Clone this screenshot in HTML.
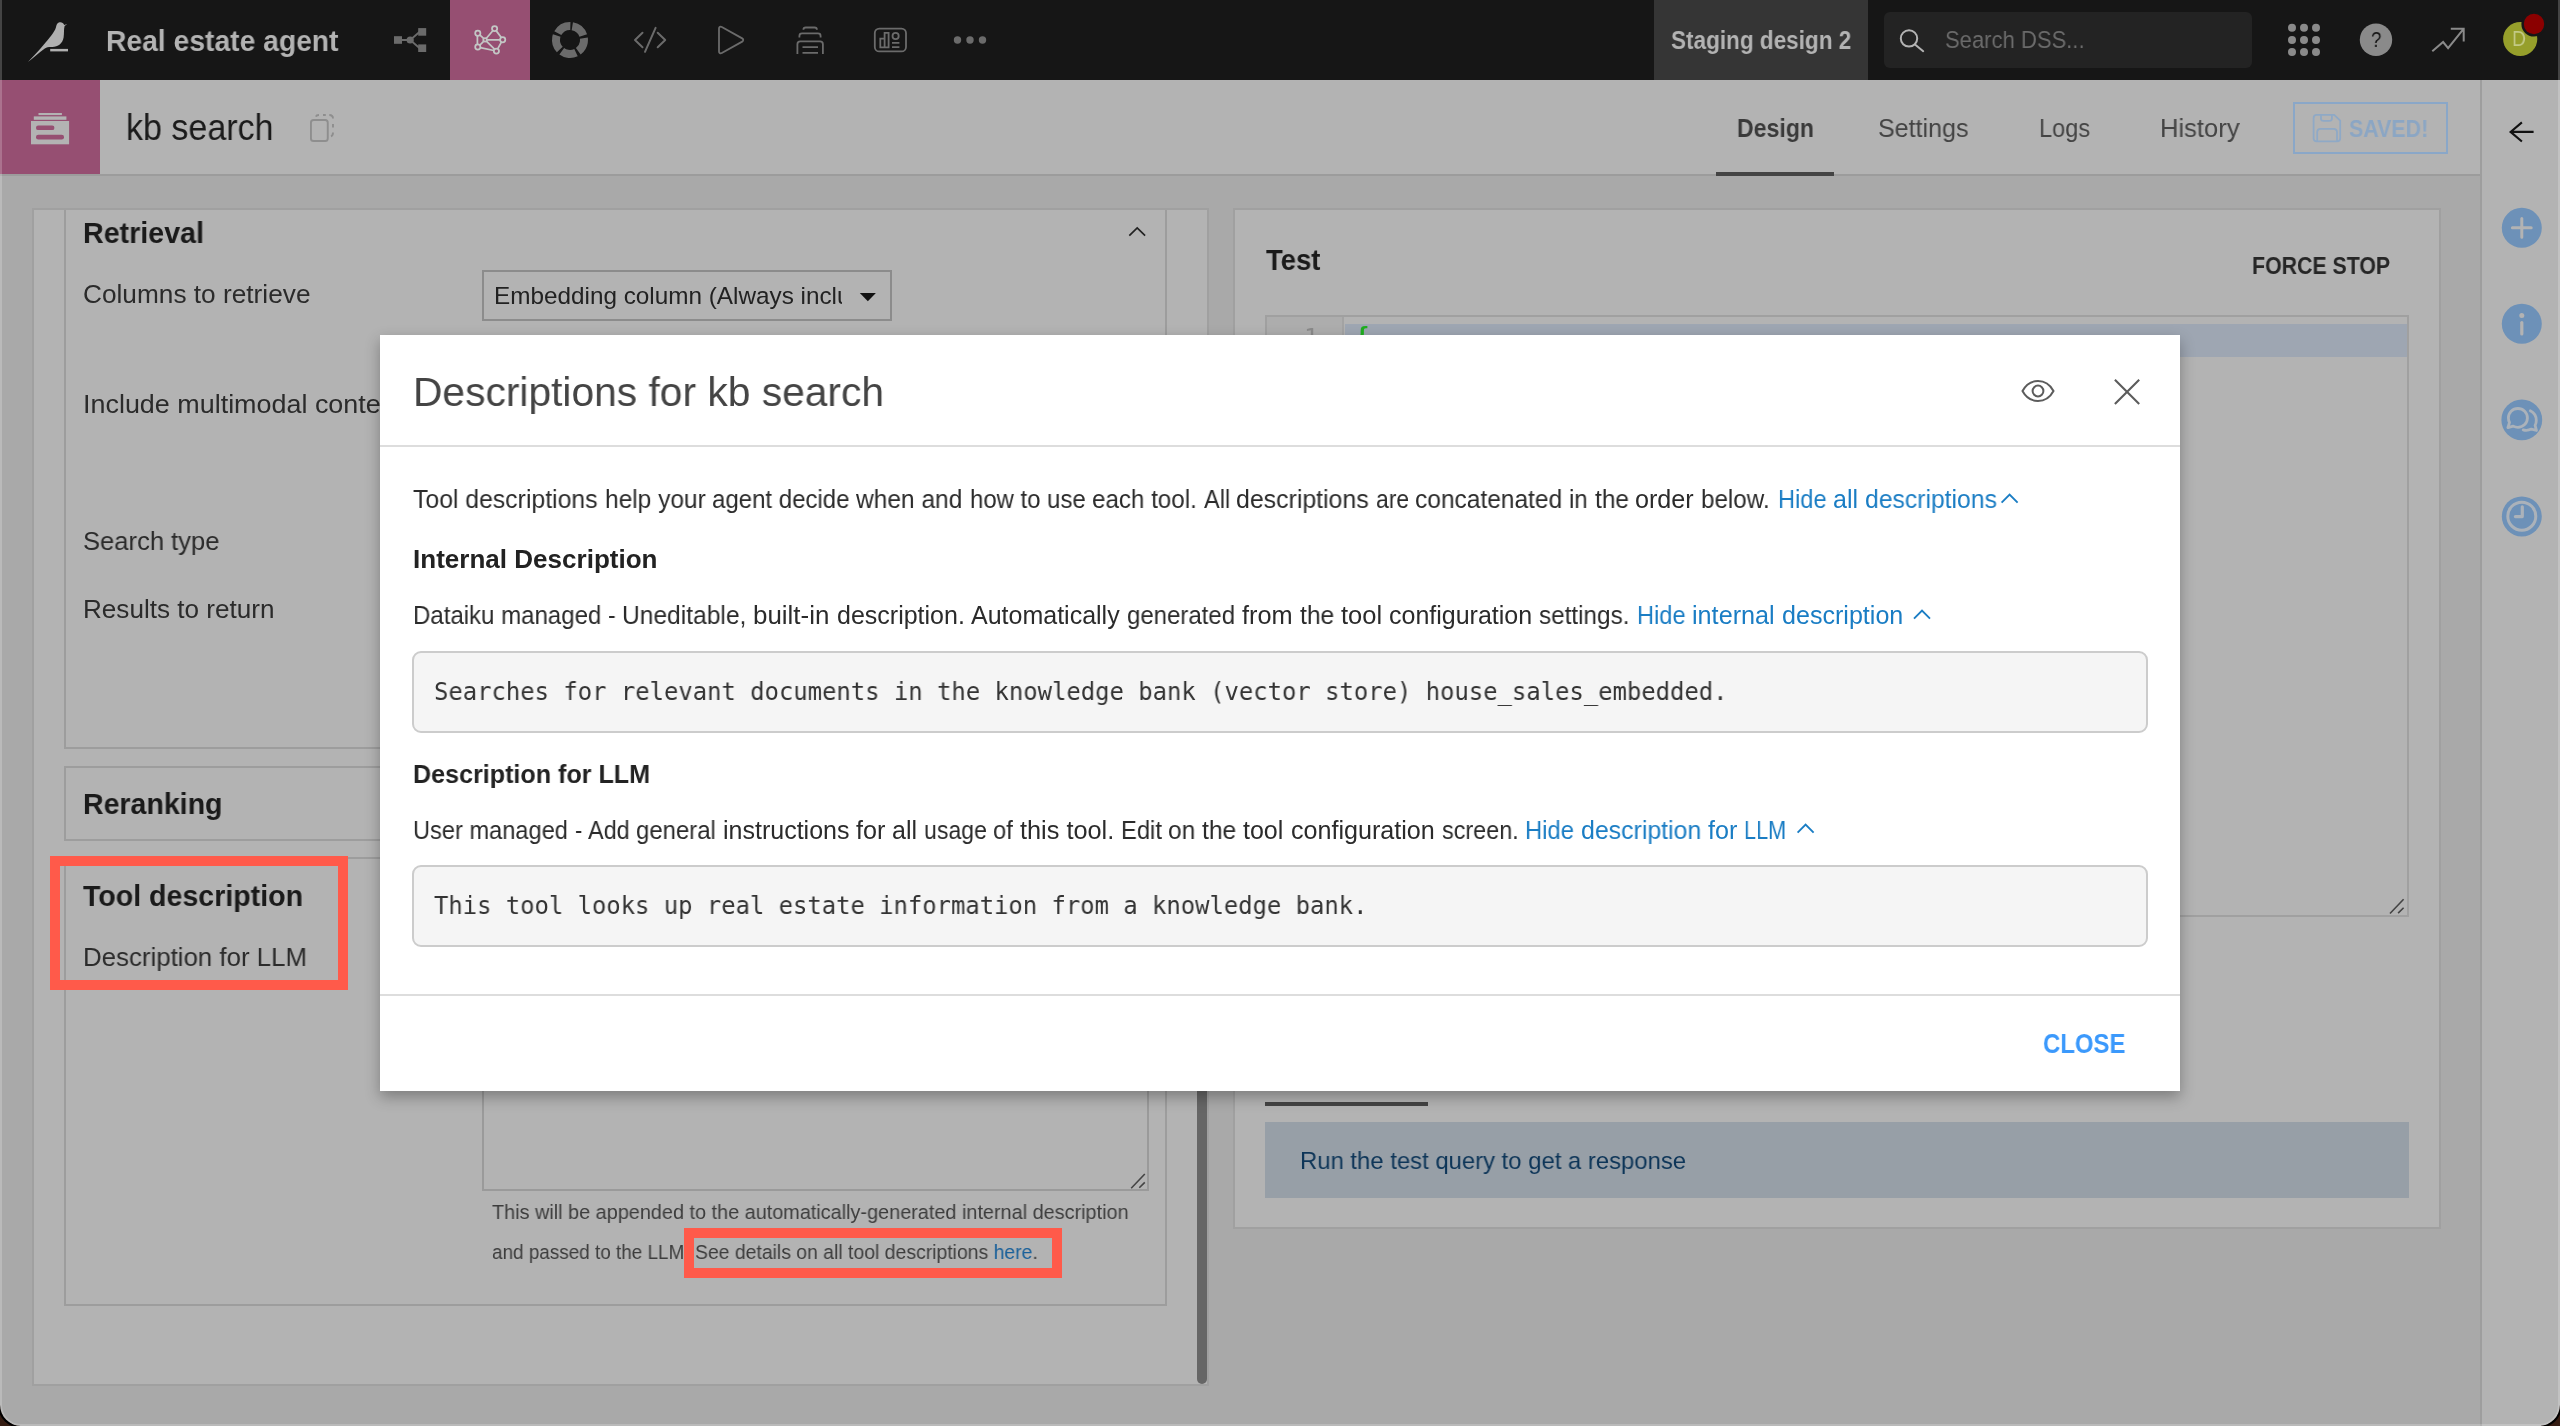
<!DOCTYPE html>
<html lang="en"><head><meta charset="utf-8"><title>kb search - Real estate agent</title>
<style>
html,body{margin:0;padding:0;}
body{width:2560px;height:1426px;overflow:hidden;position:relative;background:#a9a9a9;font-family:"Liberation Sans",sans-serif;}
.a{position:absolute;box-sizing:border-box;}
.t{position:absolute;white-space:pre;line-height:1;transform-origin:0 50%;will-change:transform;}
svg{position:absolute;overflow:visible;}
</style></head><body>
<!-- ===== background app (dimmed) ===== -->
<div class="a" id="nav" style="left:0;top:0;width:2560px;height:80px;background:#161616"></div>
<div class="a" id="navpink" style="left:450px;top:0;width:80px;height:80px;background:#964f72"></div>
<div class="a" id="navstag" style="left:1654px;top:0;width:214px;height:80px;background:#353535"></div>
<div class="a" id="navsearch" style="left:1884px;top:12px;width:368px;height:56px;background:#232323;border-radius:6px"></div>
<div class="a" id="hdr" style="left:0;top:80px;width:2480px;height:96px;background:#b3b3b3;border-bottom:2px solid #9c9c9c"></div>
<div class="a" id="hdrpink" style="left:0;top:80px;width:100px;height:94px;background:#964f72"></div>
<div class="a" id="tabline" style="left:1716px;top:172px;width:118px;height:4px;background:#444"></div>
<div class="a" id="savedbtn" style="left:2293px;top:102px;width:155px;height:52px;border:2px solid #8aa7c8"></div>
<div class="a" id="side" style="left:2480px;top:80px;width:80px;height:1346px;background:#b3b3b3;border-left:2px solid #9e9e9e"></div>
<!-- left panel -->
<div class="a" id="lp" style="left:32px;top:208px;width:1177px;height:1178px;background:#b3b3b3;border:2px solid #a0a0a0"></div>
<div class="a" id="sec1" style="left:64px;top:180px;width:1103px;height:569px;border:2px solid #9d9d9d"></div>
<div class="a" id="sec1mask" style="left:60px;top:176px;width:1120px;height:32px;background:#a9a9a9"></div>
<div class="a" id="lptop" style="left:32px;top:208px;width:1177px;height:2px;background:#a0a0a0"></div>
<div class="a" id="sec2" style="left:64px;top:766px;width:1103px;height:75px;border:2px solid #9d9d9d"></div>
<div class="a" id="sec3" style="left:64px;top:857px;width:1103px;height:449px;border:2px solid #9d9d9d"></div>
<div class="a" id="sel" style="left:482px;top:269.500px;width:410px;height:51px;border:2px solid #8c8c8c"></div>
<div class="a" id="selclip" style="left:490px;top:276px;width:351.500px;height:40px;overflow:hidden"><span class="t" id="seltxt" style="left:3.500px;top:7.700px;font-size:24.300px;color:#222">Embedding column (Always included)</span></div>
<div class="a" id="ta" style="left:482px;top:900px;width:667px;height:291px;border:2px solid #9a9a9a"></div>
<div class="a" id="sb" style="left:1197px;top:700px;width:10px;height:684px;background:#666;border-radius:5px"></div>
<!-- right panel -->
<div class="a" id="rp" style="left:1233px;top:208px;width:1208px;height:1021px;background:#b3b3b3;border:2px solid #a0a0a0"></div>
<div class="a" id="ed" style="left:1265px;top:314.500px;width:1144px;height:602.500px;border:2px solid #a0a0a0;background:#b3b3b3"></div>
<div class="a" id="edgut" style="left:1267px;top:317px;width:77px;height:598px;background:#adadad;border-right:2px solid #a3a3a3"></div>
<div class="a" id="edline" style="left:1345px;top:324px;width:1062px;height:32.500px;background:#9ea6b2"></div>
<span class="t" id="ed1" style="left:1304px;top:325.500px;font-size:24px;color:#8a8a8a;font-family:'DejaVu Sans Mono','Liberation Mono',monospace">1</span>
<span class="t" id="edb" style="left:1355px;top:324.500px;font-weight:700;font-size:24px;color:#1fae1f;font-family:'DejaVu Sans Mono','Liberation Mono',monospace">{</span>
<div class="a" id="rtab" style="left:1265px;top:1102px;width:163px;height:4px;background:#444"></div>
<div class="a" id="rinfo" style="left:1265px;top:1122px;width:1144px;height:76px;background:#979fa7"></div>
<svg id="icons-bg" width="2560" height="1426" viewBox="0 0 2560 1426" style="left:0;top:0" fill="none">
<!-- bird logo -->
<path d="M67.3 24.1 L64.2 24.9 C63.2 21.9 59.3 21.2 57.4 23.6 C56.1 25.2 56.4 27 55.3 29.2 C52.6 34.5 47 41 40.5 48.5 C36 53.5 31.5 58.2 27.9 62.1 C33.5 57.5 39 52.5 44.8 48.4 C47 47 49 46.8 52 46.9 C58 47 62.6 43.5 63.6 37.5 C64.3 33 63.6 29.5 64.6 26 Z" fill="#b0b0b0"/>
<rect x="50.2" y="48.9" width="17.8" height="2.5" fill="#b0b0b0"/>
<!-- flow icon -->
<g fill="#6b6b6b" stroke="#6b6b6b"><rect x="394" y="36.2" width="8" height="7.6" stroke="none"/><rect x="418.2" y="28.1" width="8" height="7.6" stroke="none"/><rect x="418.2" y="44.4" width="8" height="7.6" stroke="none"/><circle cx="410.2" cy="40" r="3.6" stroke="none"/><path d="M398 40H410M410.2 40L420 31.5M410.2 40L420 48.5" stroke-width="1.8" fill="none"/></g>
<!-- agent network icon -->
<g stroke="#c3c7c5" stroke-width="1.750" fill="none"><path d="M477.400 36V44.300M480 35.200L483.600 38.400M480 45L483.600 41.300M492.800 30.800L486.400 38.300M496.300 30.900L501.300 37.500M487.100 39.800H500M501.400 42.200L497.800 48.700M486.600 41.400L494.500 49.100M480.300 47.700L493.800 50.500"/><circle cx="477.800" cy="33.300" r="2.600"/><circle cx="494.600" cy="28.600" r="2.600"/><circle cx="502.700" cy="39.800" r="2.600"/><circle cx="496.400" cy="51.100" r="2.600"/><circle cx="477.800" cy="46.900" r="2.600"/><circle cx="485.100" cy="39.800" r="1.800"/></g>
<!-- ring icon -->
<circle cx="570" cy="40" r="14" stroke="#6b6b6b" stroke-width="8" stroke-dasharray="15 2.593" transform="rotate(-80.5 570 40)"/>
<!-- code icon -->
<path d="M642.5 32.8L635 40L642.5 47.2M657.7 32.8L665.2 40L657.7 47.2M655.6 27.8L645 51.8" stroke="#6b6b6b" stroke-width="2" stroke-linecap="round" stroke-linejoin="round"/>
<!-- play icon -->
<path d="M719 28.6V51.4C719 53 720.4 53.8 721.8 53L742.2 41.6C743.6 40.8 743.6 39.2 742.2 38.4L721.8 27C720.4 26.2 719 27 719 28.6Z" stroke="#6b6b6b" stroke-width="1.8" stroke-linejoin="round"/>
<!-- stack icon -->
<path d="M803.400 29.700C803.400 28.300 804.300 27.500 805.800 27.500H814.500C816 27.500 816.900 28.300 816.900 29.700M799.400 37.500V35.900C799.400 34.300 800.400 33.400 802 33.400H818C819.600 33.400 820.600 34.300 820.600 35.900V37.500M797.400 54V44.200C797.400 42.400 798.600 41.400 800.300 41.400H820C821.700 41.400 822.900 42.400 822.900 44.200V54M802.500 47.100H818M802.500 52.900H818" stroke="#6b6b6b" stroke-width="1.800"/>
<!-- dashboard icon -->
<g stroke="#6b6b6b" stroke-width="1.8"><rect x="874.8" y="28.6" width="31.2" height="22.8" rx="4.5"/><path d="M880.3 47.4V38.6H884.6V32.8H888.6V47.4ZM884.6 38.6V47.4"/><circle cx="895.6" cy="36" r="3.1"/><path d="M892 42.9H899.4M892 47.1H899.4"/></g>
<!-- more dots -->
<g fill="#6b6b6b"><circle cx="957.5" cy="40" r="3.7"/><circle cx="970" cy="40" r="3.7"/><circle cx="982.5" cy="40" r="3.7"/></g>
<!-- search icon -->
<g stroke="#b3b3b3" stroke-width="2"><circle cx="1909" cy="38.4" r="8.2"/><path d="M1915 44.5L1923.2 51.2" stroke-linecap="round"/></g>
<!-- apps grid -->
<g fill="#8a8a8a"><circle cx="2292" cy="27.8" r="4"/><circle cx="2304" cy="27.8" r="4"/><circle cx="2316" cy="27.8" r="4"/><circle cx="2292" cy="40" r="4"/><circle cx="2304" cy="40" r="4"/><circle cx="2316" cy="40" r="4"/><circle cx="2292" cy="52" r="4"/><circle cx="2304" cy="52" r="4"/><circle cx="2316" cy="52" r="4"/></g>
<!-- help -->
<circle cx="2376" cy="39.8" r="16.2" fill="#8a8a8a"/>
<!-- trend -->
<path d="M2432.3 51.2L2443.1 42L2448.1 48.1L2463.2 29.4M2450.8 28.8H2463.7V41.4" stroke="#8a8a8a" stroke-width="2"/>
<!-- avatar -->
<circle cx="2520.2" cy="39" r="17.1" fill="#969f2b"/>
<circle cx="2534" cy="24" r="12.6" fill="#161616"/>
<circle cx="2534" cy="24" r="10.2" fill="#8b0000"/>
<!-- header stack icon -->
<g fill="#b3b3b3"><rect x="38.5" y="113" width="23.4" height="2.1"/><rect x="33.8" y="116.4" width="32.6" height="3.4"/><rect x="31" y="121" width="38.1" height="23.3"/></g>
<g fill="#964f72"><rect x="36" y="125.6" width="18.4" height="4.5" rx="2.2"/><rect x="36" y="134.8" width="28" height="4.7" rx="2.3"/></g>
<!-- copy icon -->
<g stroke="#8e8e8e" stroke-width="1.900"><rect x="310.950" y="119.950" width="16.800" height="21.100" rx="2.600"/><path d="M315.900 116.600C316.300 115.400 317.400 115 319 115M323 115H325.800M329.300 115C331.800 115 333 116.200 333 118.600M333 123.900V127.600M333 132.600C333 134.600 332.400 135.800 331 136.400" stroke-linecap="butt"/></g>
<!-- saved floppy -->
<g stroke="#8fa9c6" stroke-width="1.8"><path d="M2316.8 114.9H2334.2L2340.2 120.6V138.2C2340.2 140.2 2339 141.4 2337 141.4H2316.8C2314.8 141.4 2313.6 140.2 2313.6 138.2V118.1C2313.6 116.1 2314.8 114.9 2316.8 114.9Z"/><path d="M2321 115.2V118.4C2321 119.9 2321.9 120.8 2323.4 120.8H2329.5C2331 120.8 2331.9 119.9 2331.9 118.4V115.2M2317.2 141V132.2C2317.2 130 2318.4 128.8 2320.6 128.8H2333.6C2335.8 128.8 2337 130 2337 132.2V141"/></g>
<!-- back arrow -->
<path d="M2533.6 131.9H2511M2521.9 122.4L2510.6 131.9L2521.9 141.5" stroke="#111" stroke-width="2.1"/>
<!-- sidebar circles -->
<g fill="#6d91b8"><circle cx="2521.8" cy="227.8" r="20"/><circle cx="2521.8" cy="323.8" r="20"/><circle cx="2521.8" cy="419.9" r="20.4"/><circle cx="2521.8" cy="516.4" r="20"/></g>
<g stroke="#b3b3b3" stroke-width="3" stroke-linecap="round"><path d="M2512.400 227.800H2531.200M2521.800 218.400V237.200"/><path d="M2521.800 322.500V334" stroke-width="3.200"/></g>
<circle cx="2521.800" cy="315.600" r="2.500" fill="#b3b3b3"/>
<g stroke="#abb2ba" stroke-width="2.800" stroke-linejoin="round" stroke-linecap="round"><path d="M2517.900 408.500C2523.300 408.500 2527.400 412.600 2527.400 417.900C2527.400 423.200 2523.300 427.300 2517.900 427.300C2516.200 427.300 2514.600 426.900 2513.200 426.100L2507.900 427.600L2509.500 422.500C2508.800 421.100 2508.400 419.600 2508.400 417.900C2508.400 412.600 2512.500 408.500 2517.900 408.500Z"/><path d="M2530.300 410.800C2534 412.600 2536.300 416.400 2536.300 420.500C2536.300 422.300 2535.900 423.900 2535.100 425.400L2536.500 430.500L2531.400 429.100C2528.900 430.400 2525.600 430.700 2523.200 429.900"/></g>
<g stroke="#abb2ba" stroke-width="3" stroke-linecap="round" stroke-linejoin="round"><circle cx="2521.800" cy="516.200" r="14"/><path d="M2522.300 506.800V516.600H2515.400" stroke-width="3.200"/></g>
<!-- chevron retrieval -->
<path d="M1129.300 235.600L1137.200 227.900L1145.100 235.600" stroke="#222" stroke-width="1.700"/>
<!-- select caret -->
<path d="M859.800 293H875.900L867.850 301.300Z" fill="#111"/>
<!-- textarea resize handles -->
<path d="M1131.200 1188.200L1144.800 1174M1139.300 1187.800L1144.800 1182.400" stroke="#444" stroke-width="1.600"/>
<path d="M2390 913.500L2403.600 899.300M2398.100 913.100L2403.600 907.700" stroke="#444" stroke-width="1.600"/>
</svg>

<span class="t" id="n_proj" style="left:105.5px;top:26.13px;font-size:29.5px;font-weight:700;color:#b3b3b3;transform:scaleX(0.9581);">Real estate agent</span>
<span class="t" id="n_stag" style="left:1671px;top:27.61px;font-size:25.5px;font-weight:700;color:#b3b3b3;transform:scaleX(0.8837);">Staging design 2</span>
<span class="t" id="n_srch" style="left:1945.2px;top:28.46px;font-size:24.5px;font-weight:400;color:#6b6b6b;transform:scaleX(0.8993);">Search DSS...</span>
<span class="t" id="n_q" style="left:2370.8px;top:29.38px;font-size:22px;font-weight:400;color:#161616;transform:scaleX(0.8490);">?</span>
<span class="t" id="n_d" style="left:2512.2px;top:27.95px;font-size:22.5px;font-weight:400;color:#c3ca86;transform:scaleX(0.8615);">D</span>
<span class="t" id="h_title" style="left:126px;top:109.06px;font-size:37.5px;font-weight:400;color:#1b1b1b;transform:scaleX(0.9072);">kb search</span>
<span class="t" id="h_design" style="left:1736.5px;top:115.19px;font-size:26px;font-weight:700;color:#3a3a3a;transform:scaleX(0.8882);">Design</span>
<span class="t" id="h_settings" style="left:1878px;top:115.19px;font-size:26px;font-weight:400;color:#444;transform:scaleX(0.9632);">Settings</span>
<span class="t" id="h_logs" style="left:2038.5px;top:115.19px;font-size:26px;font-weight:400;color:#444;transform:scaleX(0.9044);">Logs</span>
<span class="t" id="h_history" style="left:2160px;top:115.19px;font-size:26px;font-weight:400;color:#444;transform:scaleX(0.9826);">History</span>
<span class="t" id="h_saved" style="left:2349.3px;top:116.58px;font-size:24px;font-weight:700;color:#8ba6c4;transform:scaleX(0.8908);">SAVED!</span>
<span class="t" id="l_retr" style="left:83px;top:219.25px;font-size:29px;font-weight:700;color:#1a1a1a;transform:scaleX(0.9876);">Retrieval</span>
<span class="t" id="l_cols" style="left:83px;top:280.79px;font-size:26px;font-weight:400;color:#2b2b2b;transform:scaleX(1.0092);">Columns to retrieve</span>
<span class="t" id="l_incl" style="left:82.5px;top:391.49px;font-size:26px;font-weight:400;color:#2b2b2b;transform:scaleX(1.0353);">Include multimodal content</span>
<span class="t" id="l_stype" style="left:82.5px;top:527.99px;font-size:26px;font-weight:400;color:#2b2b2b;transform:scaleX(0.9838);">Search type</span>
<span class="t" id="l_res" style="left:82.5px;top:595.99px;font-size:26px;font-weight:400;color:#2b2b2b;transform:scaleX(1.0039);">Results to return</span>
<span class="t" id="l_rerank" style="left:82.5px;top:790.45px;font-size:29px;font-weight:700;color:#1a1a1a;transform:scaleX(0.9836);">Reranking</span>
<span class="t" id="l_tooldesc" style="left:82.5px;top:881.95px;font-size:29px;font-weight:700;color:#1a1a1a;transform:scaleX(0.9848);">Tool description</span>
<span class="t" id="l_dllm" style="left:82.5px;top:944.49px;font-size:26px;font-weight:400;color:#2b2b2b;transform:scaleX(0.9937);">Description for LLM</span>
<span class="t" id="l_help1" style="left:492px;top:1201.65px;font-size:20.5px;font-weight:400;color:#3d3d3d;transform:scaleX(0.9681);">This will be appended to the automatically-generated internal description</span>
<span class="t" id="l_help2" style="left:492px;top:1241.85px;font-size:20.5px;font-weight:400;color:#3d3d3d;transform:scaleX(0.9218);">and passed to the LLM.</span>
<span class="t" id="l_help3" style="left:695.2px;top:1241.85px;font-size:20.5px;font-weight:400;color:#3d3d3d;transform:scaleX(0.9459);">See details on all tool descriptions <span style="color:#19609a">here</span>.</span>
<span class="t" id="r_test" style="left:1266.2px;top:246.45px;font-size:29px;font-weight:700;color:#1a1a1a;transform:scaleX(0.9463);">Test</span>
<span class="t" id="r_force" style="left:2252.2px;top:255.16px;font-size:23.2px;font-weight:700;color:#262626;transform:scaleX(0.9194);">FORCE STOP</span>
<span class="t" id="r_info" style="left:1300.4px;top:1148.51px;font-size:24.2px;font-weight:400;color:#0d3558;transform:scaleX(0.9868);">Run the test query to get a response</span>
<!-- ===== modal ===== -->
<div class="a" id="modal" style="left:380px;top:335px;width:1800px;height:756px;background:#fff;box-shadow:0 6px 14px rgba(0,0,0,.3)"></div>
<div class="a" id="mhl" style="left:380px;top:445px;width:1800px;height:2px;background:#ddd"></div>
<div class="a" id="mfl" style="left:380px;top:994px;width:1800px;height:2px;background:#ddd"></div>
<div class="a" id="c1" style="left:412px;top:651px;width:1736px;height:82px;background:#f5f5f5;border:2px solid #ccc;border-radius:9px"></div>
<div class="a" id="c2" style="left:412px;top:865px;width:1736px;height:82px;background:#f5f5f5;border:2px solid #ccc;border-radius:9px"></div>
<span class="t" id="m_title" style="left:413px;top:371.79px;font-size:41px;font-weight:400;color:#444;transform:scaleX(0.9937);">Descriptions for kb search</span>
<span class="t" id="m_h1" style="left:413px;top:546.49px;font-size:26px;font-weight:700;color:#222;transform:scaleX(1.0014);">Internal Description</span>
<span class="t" id="m_c1" style="left:433.5px;top:680.14px;font-size:24.5px;font-weight:400;color:#333;font-family:'DejaVu Sans Mono', 'Liberation Mono', monospace;transform:scaleX(0.9744);">Searches for relevant documents in the knowledge bank (vector store) house_sales_embedded.</span>
<span class="t" id="m_h2" style="left:413px;top:760.99px;font-size:26px;font-weight:700;color:#222;transform:scaleX(0.9651);">Description for LLM</span>
<span class="t" id="m_c2" style="left:433.5px;top:894.14px;font-size:24.5px;font-weight:400;color:#333;font-family:'DejaVu Sans Mono', 'Liberation Mono', monospace;transform:scaleX(0.9736);">This tool looks up real estate information from a knowledge bank.</span>
<span class="t" id="m_close" style="left:2042.5px;top:1030.30px;font-size:28px;font-weight:700;color:#3b99fc;transform:scaleX(0.8552);">CLOSE</span>
<span class="t" id="m_l1_0" style="left:413.2px;top:487.14px;font-size:25px;font-weight:400;color:#2b2b2b;transform:scaleX(0.9909);">Tool descriptions </span>
<span class="t" id="m_l1_1" style="left:604.6px;top:487.14px;font-size:25px;font-weight:400;color:#2b2b2b;transform:scaleX(0.9800);">help your </span>
<span class="t" id="m_l1_2" style="left:712.2px;top:487.14px;font-size:25px;font-weight:400;color:#2b2b2b;transform:scaleX(0.9605);">agent decide </span>
<span class="t" id="m_l1_3" style="left:856.4px;top:487.14px;font-size:25px;font-weight:400;color:#2b2b2b;transform:scaleX(0.9811);">when and </span>
<span class="t" id="m_l1_4" style="left:969.6px;top:487.14px;font-size:25px;font-weight:400;color:#2b2b2b;transform:scaleX(0.9573);">how to use </span>
<span class="t" id="m_l1_5" style="left:1092px;top:487.14px;font-size:25px;font-weight:400;color:#2b2b2b;transform:scaleX(0.9665);">each tool. </span>
<span class="t" id="m_l1_6" style="left:1203.5px;top:487.14px;font-size:25px;font-weight:400;color:#2b2b2b;transform:scaleX(0.9414);">All </span>
<span class="t" id="m_l1_7" style="left:1236.2px;top:487.14px;font-size:25px;font-weight:400;color:#2b2b2b;transform:scaleX(0.9946);">descriptions </span>
<span class="t" id="m_l1_8" style="left:1375.8px;top:487.14px;font-size:25px;font-weight:400;color:#2b2b2b;transform:scaleX(0.9143);">are </span>
<span class="t" id="m_l1_9" style="left:1415.2px;top:487.14px;font-size:25px;font-weight:400;color:#2b2b2b;transform:scaleX(0.9804);">concatenated </span>
<span class="t" id="m_l1_10" style="left:1569.2px;top:487.14px;font-size:25px;font-weight:400;color:#2b2b2b;transform:scaleX(0.9581);">in </span>
<span class="t" id="m_l1_11" style="left:1594.5px;top:487.14px;font-size:25px;font-weight:400;color:#2b2b2b;transform:scaleX(0.9783);">the </span>
<span class="t" id="m_l1_12" style="left:1635.3px;top:487.14px;font-size:25px;font-weight:400;color:#2b2b2b;transform:scaleX(1.0059);">order </span>
<span class="t" id="m_l1_13" style="left:1701px;top:487.14px;font-size:25px;font-weight:400;color:#2b2b2b;transform:scaleX(0.9677);">below.</span>
<span class="t" id="m_l1a_0" style="left:1777.7px;top:487.14px;font-size:25px;font-weight:400;color:#1a7dc4;transform:scaleX(0.9456);">Hide </span>
<span class="t" id="m_l1a_1" style="left:1832.9px;top:487.14px;font-size:25px;font-weight:400;color:#1a7dc4;transform:scaleX(0.9885);">all </span>
<span class="t" id="m_l1a_2" style="left:1864.5px;top:487.14px;font-size:25px;font-weight:400;color:#1a7dc4;transform:scaleX(0.9887);">descriptions</span>
<span class="t" id="m_l2_0" style="left:413.2px;top:603.34px;font-size:25px;font-weight:400;color:#2b2b2b;transform:scaleX(0.9610);">Dataiku managed </span>
<span class="t" id="m_l2_1" style="left:608.2px;top:603.34px;font-size:25px;font-weight:400;color:#2b2b2b;transform:scaleX(0.9162);">- </span>
<span class="t" id="m_l2_2" style="left:622.2px;top:603.34px;font-size:25px;font-weight:400;color:#2b2b2b;transform:scaleX(0.9832);">Uneditable, </span>
<span class="t" id="m_l2_3" style="left:753.4px;top:603.34px;font-size:25px;font-weight:400;color:#2b2b2b;transform:scaleX(1.0373);">built-in </span>
<span class="t" id="m_l2_4" style="left:837px;top:603.34px;font-size:25px;font-weight:400;color:#2b2b2b;transform:scaleX(0.9971);">description. </span>
<span class="t" id="m_l2_5" style="left:971.4px;top:603.34px;font-size:25px;font-weight:400;color:#2b2b2b;">Automatically </span>
<span class="t" id="m_l2_6" style="left:1127.1px;top:603.34px;font-size:25px;font-weight:400;color:#2b2b2b;transform:scaleX(0.9595);">generated </span>
<span class="t" id="m_l2_7" style="left:1241.8px;top:603.34px;font-size:25px;font-weight:400;color:#2b2b2b;transform:scaleX(1.0131);">from </span>
<span class="t" id="m_l2_8" style="left:1299.5px;top:603.34px;font-size:25px;font-weight:400;color:#2b2b2b;transform:scaleX(0.9855);">the </span>
<span class="t" id="m_l2_9" style="left:1340.6px;top:603.34px;font-size:25px;font-weight:400;color:#2b2b2b;transform:scaleX(1.0198);">tool </span>
<span class="t" id="m_l2_10" style="left:1388.8px;top:603.34px;font-size:25px;font-weight:400;color:#2b2b2b;transform:scaleX(0.9979);">configuration </span>
<span class="t" id="m_l2_11" style="left:1538.6px;top:603.34px;font-size:25px;font-weight:400;color:#2b2b2b;transform:scaleX(0.9709);">settings.</span>
<span class="t" id="m_l2a_0" style="left:1637px;top:603.34px;font-size:25px;font-weight:400;color:#1a7dc4;transform:scaleX(0.9456);">Hide </span>
<span class="t" id="m_l2a_1" style="left:1692.2px;top:603.34px;font-size:25px;font-weight:400;color:#1a7dc4;transform:scaleX(1.0084);">internal </span>
<span class="t" id="m_l2a_2" style="left:1781.9px;top:603.34px;font-size:25px;font-weight:400;color:#1a7dc4;transform:scaleX(1.0033);">description</span>
<span class="t" id="m_l3_0" style="left:413.2px;top:817.84px;font-size:25px;font-weight:400;color:#2b2b2b;transform:scaleX(0.9448);">User managed </span>
<span class="t" id="m_l3_1" style="left:574.7px;top:817.84px;font-size:25px;font-weight:400;color:#2b2b2b;transform:scaleX(0.8769);">- </span>
<span class="t" id="m_l3_2" style="left:588.1px;top:817.84px;font-size:25px;font-weight:400;color:#2b2b2b;transform:scaleX(0.9371);">Add </span>
<span class="t" id="m_l3_3" style="left:636.3px;top:817.84px;font-size:25px;font-weight:400;color:#2b2b2b;transform:scaleX(0.9573);">general </span>
<span class="t" id="m_l3_4" style="left:722.8px;top:817.84px;font-size:25px;font-weight:400;color:#2b2b2b;transform:scaleX(0.9986);">instructions </span>
<span class="t" id="m_l3_5" style="left:856px;top:817.84px;font-size:25px;font-weight:400;color:#2b2b2b;transform:scaleX(1.0048);">for </span>
<span class="t" id="m_l3_6" style="left:892.3px;top:817.84px;font-size:25px;font-weight:400;color:#2b2b2b;transform:scaleX(0.9885);">all </span>
<span class="t" id="m_l3_7" style="left:923.9px;top:817.84px;font-size:25px;font-weight:400;color:#2b2b2b;transform:scaleX(0.9232);">usage </span>
<span class="t" id="m_l3_8" style="left:993.2px;top:817.84px;font-size:25px;font-weight:400;color:#2b2b2b;transform:scaleX(0.9461);">of </span>
<span class="t" id="m_l3_9" style="left:1019.5px;top:817.84px;font-size:25px;font-weight:400;color:#2b2b2b;transform:scaleX(1.0124);">this tool. </span>
<span class="t" id="m_l3_10" style="left:1120.8px;top:817.84px;font-size:25px;font-weight:400;color:#2b2b2b;transform:scaleX(0.9494);">Edit </span>
<span class="t" id="m_l3_11" style="left:1168.3px;top:817.84px;font-size:25px;font-weight:400;color:#2b2b2b;transform:scaleX(0.9780);">on </span>
<span class="t" id="m_l3_12" style="left:1202.3px;top:817.84px;font-size:25px;font-weight:400;color:#2b2b2b;transform:scaleX(0.9855);">the </span>
<span class="t" id="m_l3_13" style="left:1243.4px;top:817.84px;font-size:25px;font-weight:400;color:#2b2b2b;transform:scaleX(1.0007);">tool </span>
<span class="t" id="m_l3_14" style="left:1290.7px;top:817.84px;font-size:25px;font-weight:400;color:#2b2b2b;transform:scaleX(1.0046);">configuration </span>
<span class="t" id="m_l3_15" style="left:1441.5px;top:817.84px;font-size:25px;font-weight:400;color:#2b2b2b;transform:scaleX(0.9355);">screen.</span>
<span class="t" id="m_l3a_0" style="left:1525.2px;top:817.84px;font-size:25px;font-weight:400;color:#1a7dc4;transform:scaleX(0.9525);">Hide </span>
<span class="t" id="m_l3a_1" style="left:1580.8px;top:817.84px;font-size:25px;font-weight:400;color:#1a7dc4;transform:scaleX(0.9948);">description </span>
<span class="t" id="m_l3a_2" style="left:1708px;top:817.84px;font-size:25px;font-weight:400;color:#1a7dc4;transform:scaleX(1.0048);">for </span>
<span class="t" id="m_l3a_3" style="left:1744.3px;top:817.84px;font-size:25px;font-weight:400;color:#1a7dc4;transform:scaleX(0.8676);">LLM</span>
<svg id="icons-modal" width="2560" height="1426" viewBox="0 0 2560 1426" style="left:0;top:0" fill="none">
<!-- eye -->
<g stroke="#5c5c5c" stroke-width="2"><path d="M2022.500 391C2026 384.500 2031.500 381 2038 381C2044.500 381 2050 384.500 2053.500 391C2050 397.500 2044.500 401 2038 401C2031.500 401 2026 397.500 2022.500 391Z"/><circle cx="2038" cy="391" r="5.400"/></g>
<!-- close X -->
<path d="M2114.900 379.800L2139.200 404M2139.200 379.800L2114.900 404" stroke="#5c5c5c" stroke-width="2.100"/>
<!-- link chevrons -->
<g stroke="#1a7dc4" stroke-width="1.900"><path d="M2001.600 502.600L2009.600 494.600L2017.600 502.600"/><path d="M1914 618.600L1922 610.600L1930 618.600"/><path d="M1797.600 832.600L1805.600 824.600L1813.600 832.600"/></g>
</svg>

<!-- ===== annotation boxes ===== -->
<div class="a" id="red1" style="left:50px;top:856px;width:298px;height:134px;border:10px solid #ff5a4a"></div>
<div class="a" id="red2" style="left:684px;top:1228px;width:378px;height:50px;border:10px solid #ff5a4a"></div>
<div class="a" id="winframe" style="left:0;top:-30px;width:2560px;height:1456px;border:2px solid rgba(255,255,255,.2);border-radius:21px;box-shadow:0 0 0 2px #000,0 0 0 60px #351c12;pointer-events:none"></div>
</body></html>
